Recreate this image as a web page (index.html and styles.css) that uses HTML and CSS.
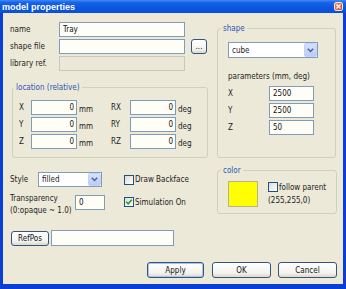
FILE: index.html
```html
<!DOCTYPE html>
<html lang="en">
<head>
  <meta charset="UTF-8" />
  <title>model properties</title>
  <link rel="stylesheet" href="styles.css">
</head>
<body>
  <div class="window">
    <!-- Title bar -->
    <div class="titlebar">
      <span class="title">model properties</span>
      <span class="close">
        <svg width="5" height="5" viewBox="0 0 5 5"><path d="M0.5 0.5 L4.5 4.5 M4.5 0.5 L0.5 4.5" stroke="#fff" stroke-width="1.3"/></svg>
      </span>
    </div>

    <div class="frame">
      <div class="upper">
        <div class="left">
          <div class="field"><label>name</label><input class="text" type="text" value="Tray" readonly></div>
          <div class="field"><label>shape file</label><input class="text" type="text" readonly><button class="btn browse">...</button></div>
          <div class="field"><label>library ref.</label><input class="text" type="text" disabled></div>

          <!-- Location -->
          <fieldset class="group location">
            <legend>location (relative)</legend>
            <div class="loc-grid">
              <span>X</span><input class="text num" type="text" value="0" readonly><span class="unit">mm</span>
              <span>RX</span><input class="text num" type="text" value="0" readonly><span class="unit">deg</span>
              <span>Y</span><input class="text num" type="text" value="0" readonly><span class="unit">mm</span>
              <span>RY</span><input class="text num" type="text" value="0" readonly><span class="unit">deg</span>
              <span>Z</span><input class="text num" type="text" value="0" readonly><span class="unit">mm</span>
              <span>RZ</span><input class="text num" type="text" value="0" readonly><span class="unit">deg</span>
            </div>
          </fieldset>
        </div>

        <!-- Shape -->
        <fieldset class="group shape">
          <legend>shape</legend>
          <div class="shape-body">
            <div class="combo shape-combo">
              <span class="combo-value">cube</span>
              <span class="arrow"><svg width="7" height="5" viewBox="0 0 7 5"><path d="M0.8 0.8 L3.5 3.6 L6.2 0.8" fill="none" stroke="#4A5F8C" stroke-width="1.4"/></svg></span>
            </div>
            <p class="params">parameters (mm, deg)</p>
            <div class="param-grid">
              <span>X</span><input class="text" type="text" value="2500" readonly>
              <span>Y</span><input class="text" type="text" value="2500" readonly>
              <span>Z</span><input class="text" type="text" value="50" readonly>
            </div>
          </div>
        </fieldset>
      </div>

      <div class="lower">
        <div class="lower-left">
          <div class="opts">
            <div class="style-row">
              <label>Style</label>
              <div class="combo style-combo">
                <span class="combo-value">filled</span>
                <span class="arrow"><svg width="7" height="5" viewBox="0 0 7 5"><path d="M0.8 0.8 L3.5 3.6 L6.2 0.8" fill="none" stroke="#4A5F8C" stroke-width="1.4"/></svg></span>
              </div>
            </div>
            <div class="check first-check"><span class="box"></span>Draw Backface</div>

            <div class="trans-row">
              <label>Transparency<br>(0:opaque ~ 1.0)</label>
              <input class="text trans" type="text" value="0" readonly>
            </div>
            <div class="check second-check">
              <span class="box"><svg width="8" height="8" viewBox="0 0 8 8"><path d="M1.2 3.8 L3.2 5.8 L6.8 1.8" fill="none" stroke="#21A121" stroke-width="1.6"/></svg></span>Simulation On
            </div>
          </div>

          <div class="refpos">
            <button class="btn refpos-btn">RefPos</button>
            <input class="text refpos-input" type="text" readonly>
          </div>
        </div>

        <!-- Color -->
        <fieldset class="group color">
          <legend>color</legend>
          <div class="color-body">
            <span class="swatch"></span>
            <div class="color-info">
              <div class="check"><span class="box"></span>follow parent</div>
              <span class="rgb">(255,255,0)</span>
            </div>
          </div>
        </fieldset>
      </div>

      <div class="actions">
        <button class="btn apply">Apply</button>
        <button class="btn ok">OK</button>
        <button class="btn cancel">Cancel</button>
      </div>
    </div>
  </div>
</body>
</html>
```

FILE: styles.css
```css
* {
  box-sizing: border-box;
}

body {
  margin: 0;
  font-family: "DejaVu Sans Condensed", "Liberation Sans", sans-serif;
  font-size: 8px;
  color: #1c1c1c;
  background-color: #ECE9D8;
}

.window {
  width: 346px;
  height: 289px;
  display: flex;
  flex-direction: column;
}

.titlebar {
  height: 13px;
  display: flex;
  align-items: center;
  padding: 0 3px 0 2px;
  background: linear-gradient(#3F8BF5 0, #1862E8 20%, #0A56DE 60%, #0B50D6 100%);
  color: #fff;
}

.title {
  font: bold 9px "Liberation Sans", sans-serif;
}

.close {
  margin-left: auto;
  width: 9px;
  height: 9px;
  border: 1px solid #F2E6E0;
  border-radius: 2px;
  background: linear-gradient(135deg, #F08A64, #D9441C);
  display: flex;
  align-items: center;
  justify-content: center;
}

.frame {
  flex: 1;
  display: flex;
  flex-direction: column;
  background-color: #ECE9D8;
  border: solid #0A3FD6;
  border-width: 0 3px 5px 3px;
  padding: 9px 6px 6px 7px;
}

/* inputs and buttons */
.text {
  height: 15px;
  margin: 0;
  padding: 0 3px;
  border: 1px solid #7F9DB9;
  background-color: #FFFEF6;
  font: inherit;
  color: #111;
  outline: none;
}

.text:disabled {
  background-color: #EBE8D7;
  border-color: #C9C7BA;
}

.num {
  text-align: right;
  padding-right: 2px;
}

.btn {
  margin: 0;
  padding: 0;
  font: inherit;
  color: #111;
  border: 1px solid #33557F;
  border-radius: 3px;
  background: linear-gradient(#FFFFFF, #F4F3EE 70%, #DCD8CC);
}

/* top section */
.upper {
  display: flex;
  gap: 9px;
}

.left {
  width: 198px;
}

.field {
  display: flex;
  align-items: center;
  height: 15px;
  margin-bottom: 2px;
}

.field label {
  width: 49px;
}

.field .text {
  width: 126px;
}

.browse {
  margin-left: 6px;
  width: 16px;
  height: 15px;
  line-height: 8px;
}

.group {
  margin: 0;
  padding: 0;
  min-width: 0;
  border: 1px solid #D0D0BF;
  border-radius: 3px;
}

.group legend {
  padding: 0 2px;
  line-height: 11px;
  color: #2F55B4;
}

.location {
  margin: 11px 0 0 2px;
  width: 196px;
}

.location legend {
  margin-left: 1px;
}

.loc-grid {
  display: grid;
  grid-template-columns: 12px 46px 34px 19px 46px auto;
  grid-auto-rows: 15px;
  row-gap: 2px;
  align-items: center;
  padding: 7px 5px 8px 6px;
}

.loc-grid .unit {
  align-self: end;
  padding-left: 2px;
  line-height: 10px;
}

.shape {
  margin-top: 1px;
  width: 119px;
}

.shape legend,
.color legend {
  margin-left: 3px;
}

.shape-body {
  padding: 8px 0 0 10px;
}

.combo {
  display: flex;
  align-items: center;
  height: 16px;
  border: 1px solid #7F9DB9;
  background-color: #fff;
}

.combo-value {
  padding-left: 3px;
}

.arrow {
  margin-left: auto;
  width: 13px;
  height: 100%;
  border: 1px solid #C3D3F7;
  border-radius: 2px;
  background: linear-gradient(#D6E2FD, #B8CCF7);
  display: flex;
  align-items: center;
  justify-content: center;
}

.shape-combo {
  width: 90px;
}

.params {
  margin: 13px 0 4px;
  line-height: 11px;
}

.param-grid {
  display: grid;
  grid-template-columns: 41px 45px;
  grid-auto-rows: 15px;
  row-gap: 2px;
  align-items: center;
}

/* lower section */
.lower {
  display: flex;
  gap: 9px;
  margin-top: 7px;
}

.lower-left {
  width: 198px;
  padding-top: 7px;
}

.opts {
  display: grid;
  grid-template-columns: 114px auto;
  row-gap: 6px;
}

.style-row {
  display: flex;
  align-items: center;
  height: 15px;
}

.style-row label {
  width: 28px;
}

.style-combo {
  width: 64px;
  height: 15px;
}

.trans-row {
  display: flex;
  align-items: flex-start;
}

.trans-row label {
  width: 65px;
  line-height: 12px;
}

.trans {
  width: 30px;
  margin-top: 2px;
}

.check {
  display: flex;
  align-items: center;
  gap: 1px;
}

.first-check {
  align-self: center;
}

.second-check {
  align-self: start;
  margin-top: 4px;
}

.box {
  width: 10px;
  height: 10px;
  border: 1px solid #1C5180;
  background: linear-gradient(135deg, #DCDCD6, #FFFFFF);
  display: flex;
  align-items: center;
  justify-content: center;
}

.refpos {
  display: flex;
  align-items: center;
  gap: 2px;
  margin-top: 13px;
}

.refpos-btn {
  margin-left: 1px;
  width: 38px;
  height: 15px;
}

.refpos-input {
  width: 123px;
  height: 16px;
}

.color {
  width: 120px;
  align-self: flex-start;
}

.color-body {
  display: flex;
  gap: 10px;
  padding: 5px 0 6px 10px;
}

.swatch {
  width: 30px;
  height: 26px;
  background-color: #FFFF00;
  border: 1px solid #B5B38A;
}

.color-info {
  display: flex;
  flex-direction: column;
  gap: 4px;
  padding-top: 1px;
}

/* dialog buttons */
.actions {
  margin-top: auto;
  display: flex;
  justify-content: flex-end;
  gap: 7px;
}

.actions .btn {
  height: 16px;
  width: 59px;
}

.actions .apply {
  width: 57px;
  margin-right: 1px;
  box-shadow: inset 0 0 0 1px #A9C2F2;
}
```
